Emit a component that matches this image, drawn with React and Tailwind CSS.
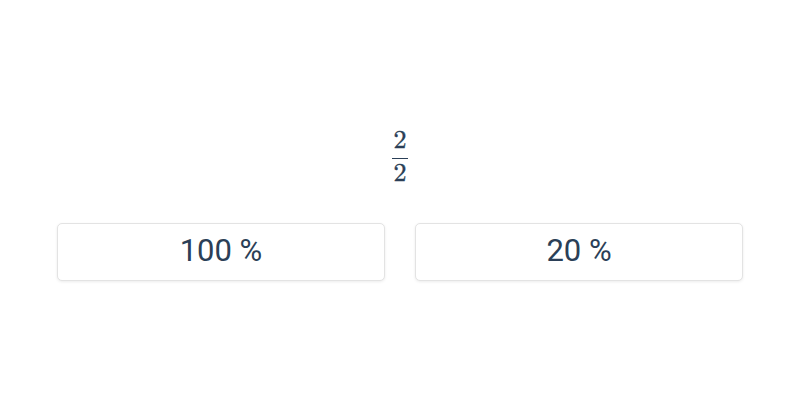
export default function App() {
  return (
    <div className="h-[400px] w-[800px] bg-white flex flex-col items-center">
      <div className="mt-[127px] flex flex-col items-center text-[#2b3f57] leading-none [-webkit-text-stroke:0.4px_#2b3f57]" style={{ fontFamily: '"Latin Modern Math", "DejaVu Serif", serif' }}>
        <span className="text-[26px] leading-[26px]">2</span>
        <div className="mt-[5px] mb-[1px] h-[1px] w-[16px] bg-[#2b3f57]" />
        <span className="text-[26px] leading-[26px]">2</span>
      </div>
      <div className="mt-[37px] grid w-[686px] grid-cols-2 gap-[30px]" style={{ fontFamily: 'Roboto, sans-serif' }}>
        <button className="h-[58px] pb-[1px] rounded-[5px] border border-[#e3e3e3] bg-white text-[31px] text-[#2b3f57] shadow-[0_1px_3px_rgba(0,0,0,0.08)]">100 %</button>
        <button className="h-[58px] pb-[1px] rounded-[5px] border border-[#e3e3e3] bg-white text-[31px] text-[#2b3f57] shadow-[0_1px_3px_rgba(0,0,0,0.08)]">20 %</button>
      </div>
    </div>
  );
}
